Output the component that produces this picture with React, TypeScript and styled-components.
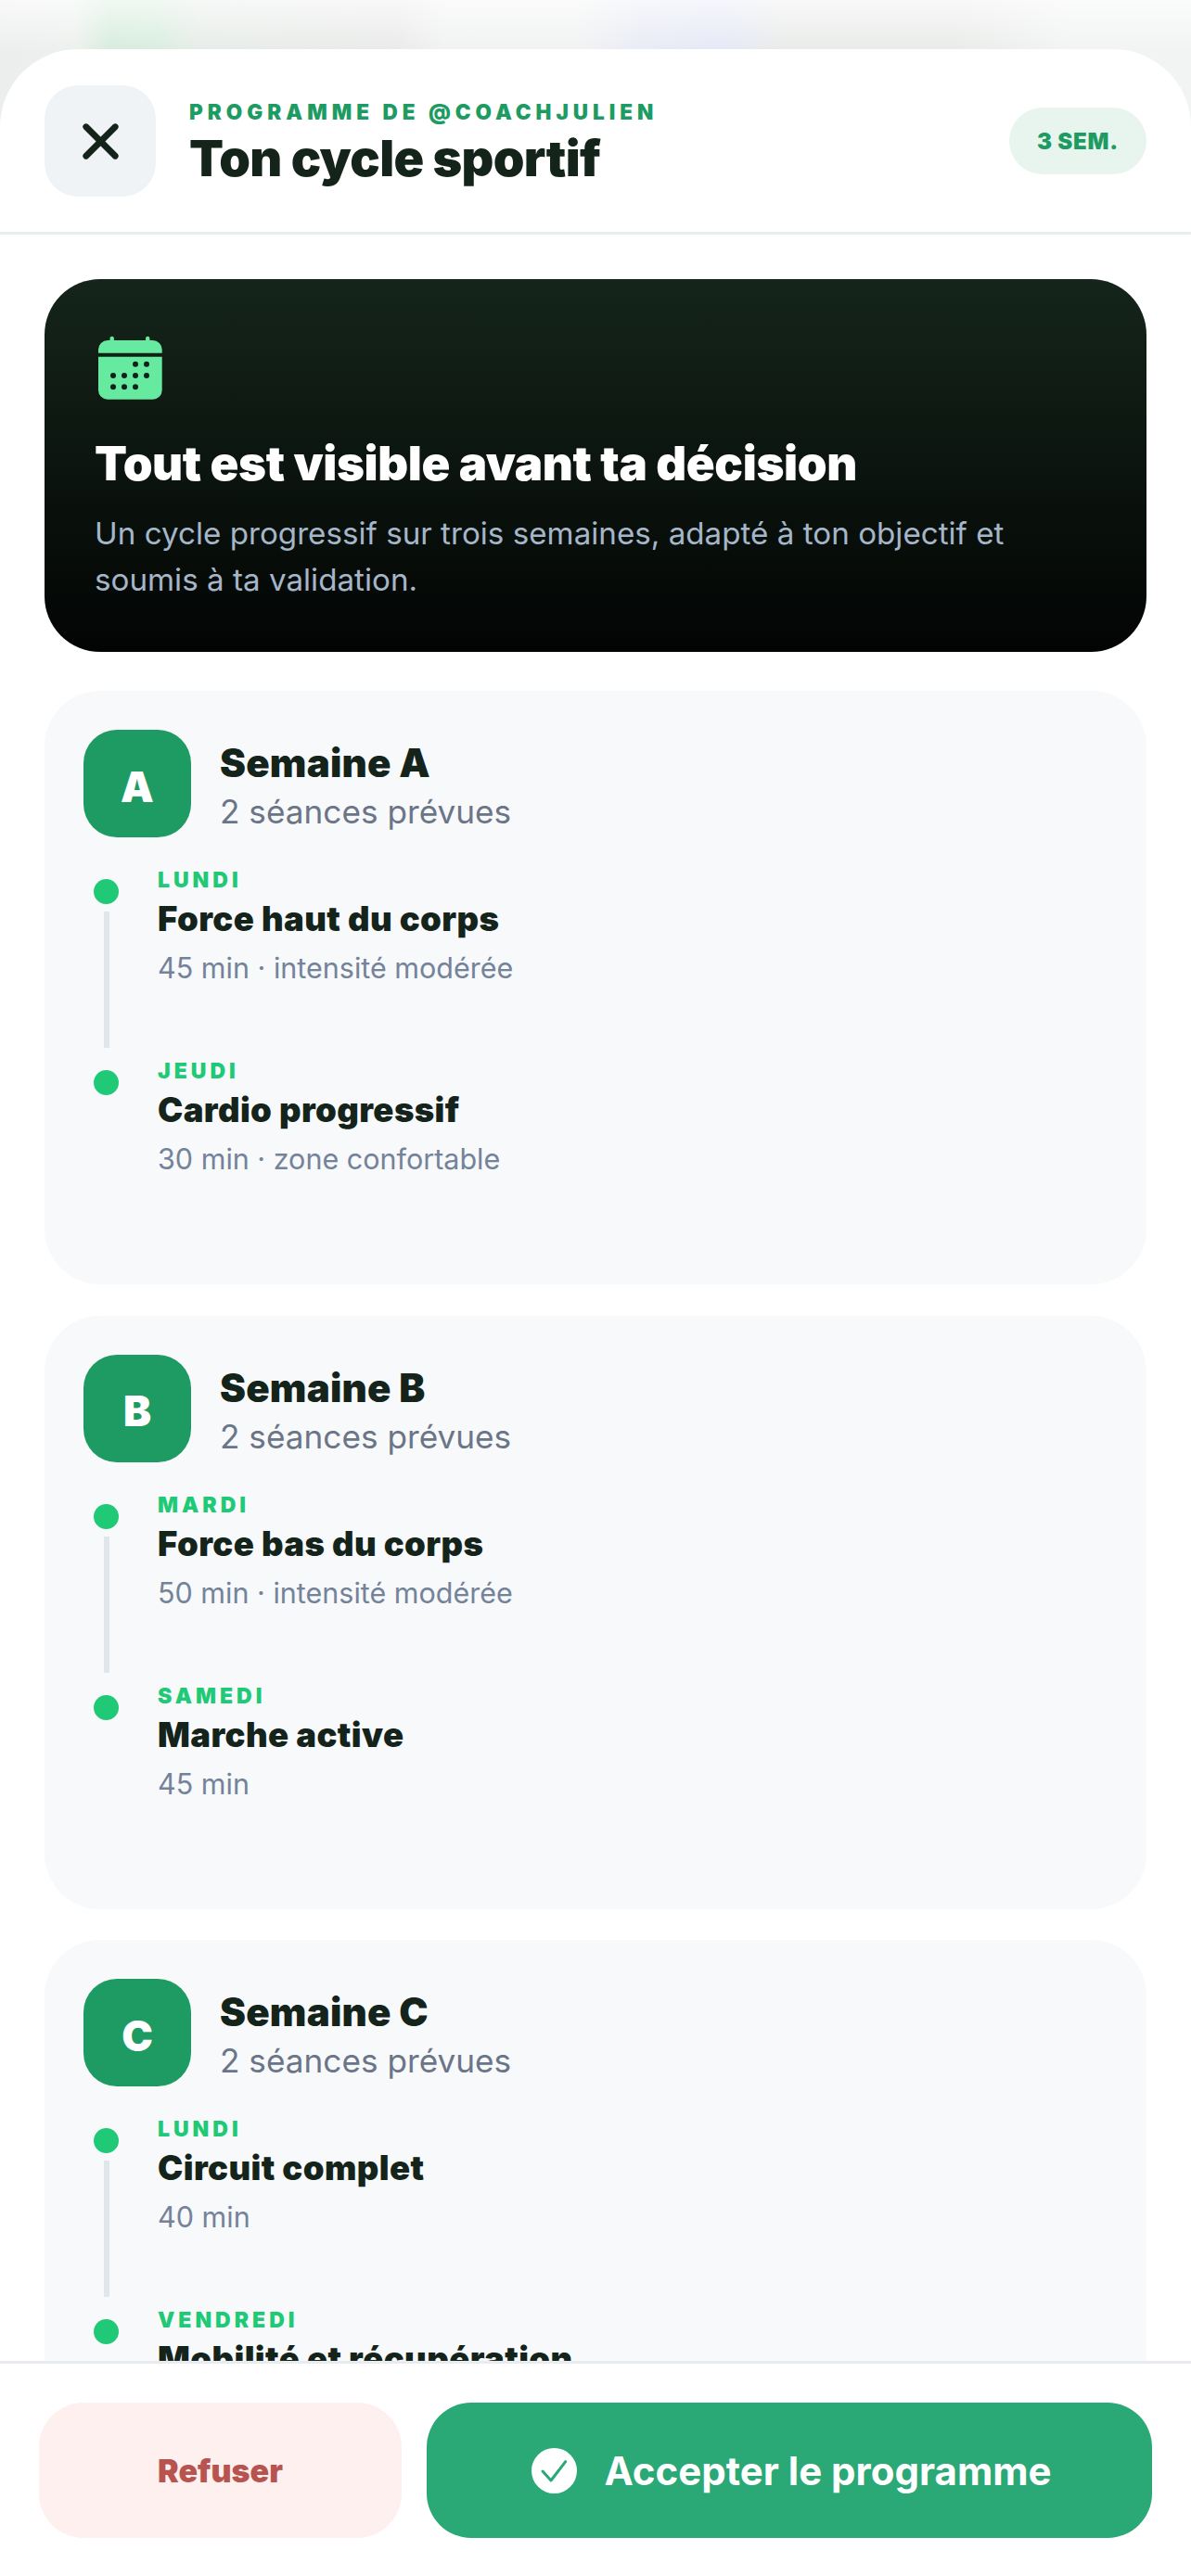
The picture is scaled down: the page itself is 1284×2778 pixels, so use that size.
import styled, { createGlobalStyle } from "styled-components";
import { X } from "lucide-react";

const GlobalStyle = createGlobalStyle`
  html, body {
    margin: 0;
    padding: 0;
    background: #fff;
  }
  * {
    box-sizing: border-box;
  }
`;

const Page = styled.div`
  width: 1284px;
  height: 2778px;
  padding-top: 53px;
  display: flex;
  flex-direction: column;
  overflow: hidden;
  font-family: Inter, "Liberation Sans", sans-serif;
  color: #14241b;
  background:
    linear-gradient(180deg, rgba(255, 255, 255, 0.65) 0, rgba(255, 255, 255, 0) 56px),
    linear-gradient(90deg, #eceeed 0, #edf1ee 80px, #d6ecdc 118px, #d8eddf 170px, #e7ece8 215px, #e9eae9 430px, #f1f3f2 480px, #f1f3f2 620px, #e8eaf5 695px, #e5e8f6 780px, #e9ebe9 840px, #e9ebe9 1030px, #f2f4f3 1150px, #f2f4f4 1284px);
`;

const Sheet = styled.div`
  flex: 1;
  min-height: 0;
  display: flex;
  flex-direction: column;
  background: #fff;
  border-radius: 84px 84px 0 0;
  overflow: hidden;
`;

const Header = styled.header`
  flex: none;
  height: 200px;
  padding: 39px 48px 0;
  display: flex;
  align-items: flex-start;
  gap: 36px;
  border-bottom: 3px solid #e8edf0;
`;

const CloseButton = styled.button`
  flex: none;
  width: 120px;
  height: 120px;
  border: none;
  border-radius: 36px;
  background: #f0f3f6;
  color: #14241b;
  display: flex;
  align-items: center;
  justify-content: center;
  padding: 0;
`;

const HeaderText = styled.div`
  flex: 1;
  min-width: 0;
`;

const Eyebrow = styled.div`
  margin-top: 14px;
  font-size: 22.5px;
  line-height: 30px;
  font-weight: 900;
  letter-spacing: 5px;
  color: #1e9b62;
  text-transform: uppercase;
`;

const Title = styled.h1`
  margin: 3px 0 0;
  font-size: 54px;
  line-height: 64px;
  font-weight: 900;
  letter-spacing: -0.7px;
  color: #14241b;
`;

const WeeksBadge = styled.div`
  flex: none;
  width: 148px;
  height: 72px;
  margin-top: 24px;
  border-radius: 36px;
  background: #e8f5ee;
  color: #1e9b62;
  display: flex;
  align-items: center;
  justify-content: center;
  font-size: 24px;
  font-weight: 900;
  letter-spacing: 0.8px;
`;

const Scroll = styled.main`
  flex: 1;
  min-height: 0;
  overflow: hidden;
  padding: 48px 48px 0;
  display: flex;
  flex-direction: column;
  gap: 33.5px;
`;

const Hero = styled.section`
  flex: none;
  height: 402px;
  margin-bottom: 8.5px;
  padding: 54px;
  border-radius: 60px;
  background: linear-gradient(180deg, #15251b 0%, #020403 100%);
`;

const HeroIcon = styled.svg`
  display: block;
  width: 84px;
  height: 84px;
`;

const HeroTitle = styled.h2`
  margin: 31px 0 0;
  font-size: 51px;
  line-height: 60px;
  font-weight: 900;
  letter-spacing: -0.4px;
  color: #fff;
  white-space: nowrap;
`;

const HeroText = styled.p`
  margin: 20px 0 0;
  font-size: 33.2px;
  line-height: 50px;
  color: #a5b6c8;
`;

const WeekCard = styled.section`
  flex: none;
  height: 640px;
  padding: 42px;
  border-radius: 60px;
  background: #f7f9fb;
`;

const WeekHead = styled.div`
  display: flex;
  align-items: center;
  gap: 31px;
`;

const WeekLetter = styled.div`
  flex: none;
  width: 116px;
  height: 116px;
  padding-top: 6px;
  border-radius: 36px;
  background: #1e9b62;
  color: #fff;
  display: flex;
  align-items: center;
  justify-content: center;
  font-size: 45px;
  font-weight: 900;
`;

const WeekInfo = styled.div`
  padding-top: 6px;
`;

const WeekName = styled.div`
  font-size: 42px;
  line-height: 54px;
  font-weight: 900;
  letter-spacing: 0.2px;
  color: #14241b;
`;

const WeekSub = styled.div`
  font-size: 35.2px;
  line-height: 50px;
  color: #6b7588;
`;

const Timeline = styled.div`
  margin-top: 31px;
  display: flex;
  flex-direction: column;
`;

const Session = styled.div`
  height: 206px;
  display: flex;
  gap: 42px;
`;

const Rail = styled.div`
  flex: none;
  width: 27px;
  margin-left: 11px;
  padding-top: 14px;
  display: flex;
  flex-direction: column;
  align-items: center;
`;

const Dot = styled.div`
  flex: none;
  width: 27px;
  height: 27px;
  border-radius: 50%;
  background: #20c975;
`;

const RailLine = styled.div`
  width: 6px;
  height: 147px;
  margin-top: 8px;
  background: #dfe7eb;
`;

const Day = styled.div`
  font-size: 23px;
  line-height: 30px;
  font-weight: 900;
  letter-spacing: 4px;
  color: #20c975;
  text-transform: uppercase;
`;

const SessionTitle = styled.div`
  margin-top: 4px;
  font-size: 36.5px;
  line-height: 46px;
  font-weight: 900;
  letter-spacing: 0.4px;
  color: #14241b;
`;

const SessionMeta = styled.div`
  margin-top: 8px;
  font-size: 30.5px;
  line-height: 44px;
  color: #74839a;
`;

const Footer = styled.footer`
  flex: none;
  height: 232px;
  padding: 42px;
  display: grid;
  grid-template-columns: 391fr 782fr;
  gap: 27px;
  background: #fff;
  border-top: 3px solid #e8ecf0;
`;

const ActionButton = styled.button<{ $primary?: boolean }>`
  height: 146px;
  border: none;
  border-radius: 48px;
  padding: ${(p) => (p.$primary ? "0 0 0 5px" : "0")};
  display: flex;
  align-items: center;
  justify-content: center;
  gap: 29px;
  font-family: inherit;
  font-size: ${(p) => (p.$primary ? "42px" : "34px")};
  font-weight: ${(p) => (p.$primary ? 700 : 900)};
  background: ${(p) => (p.$primary ? "#2aa876" : "#fef0ee")};
  color: ${(p) => (p.$primary ? "#fff" : "#b85450")};
`;

const CheckIcon = styled.svg`
  flex: none;
  width: 49px;
  height: 49px;
`;

const weeks = [
  {
    letter: "A",
    sessions: [
      { day: "Lundi", title: "Force haut du corps", meta: "45 min · intensité modérée" },
      { day: "Jeudi", title: "Cardio progressif", meta: "30 min · zone confortable" },
    ],
  },
  {
    letter: "B",
    sessions: [
      { day: "Mardi", title: "Force bas du corps", meta: "50 min · intensité modérée" },
      { day: "Samedi", title: "Marche active", meta: "45 min" },
    ],
  },
  {
    letter: "C",
    sessions: [
      { day: "Lundi", title: "Circuit complet", meta: "40 min" },
      { day: "Vendredi", title: "Mobilité et récupération" },
    ],
  },
];

const calendarDots = [
  [44, 37.7], [56, 37.7],
  [20, 50], [32, 50], [44, 50], [56, 50],
  [20, 62.300], [32, 62.300], [44, 62.300],
];

export default function App() {
  return (
    <Page>
      <GlobalStyle />
      <Sheet>
        <Header>
          <CloseButton aria-label="Fermer">
            <X size={63} strokeWidth={2.6} />
          </CloseButton>
          <HeaderText>
            <Eyebrow>Programme de @coachjulien</Eyebrow>
            <Title>Ton cycle sportif</Title>
          </HeaderText>
          <WeeksBadge>3 SEM.</WeeksBadge>
        </Header>

        <Scroll>
          <Hero>
            <HeroIcon viewBox="0 0 84 84">
              <path
                fill="#66eaa0"
                d="M4 25.700V22a10 10 0 0 1 10-10h2.500v-2a2.200 2.200 0 0 1 4.400 0v2H55v-2a2.200 2.200 0 0 1 4.400 0v2h3.300a10 10 0 0 1 10 10v3.700Z"
              />
              <path fill="#66eaa0" d="M4 29.700h68.700v36a10 10 0 0 1-10 10H14a10 10 0 0 1-10-10Z" />
              {calendarDots.map(([cx, cy]) => (
                <circle key={`${cx}-${cy}`} cx={cx} cy={cy} r={3} fill="#10201a" />
              ))}
            </HeroIcon>
            <HeroTitle>Tout est visible avant ta décision</HeroTitle>
            <HeroText>
              Un cycle progressif sur trois semaines, adapté à ton objectif et soumis à ta validation.
            </HeroText>
          </Hero>

          {weeks.map((week) => (
            <WeekCard key={week.letter}>
              <WeekHead>
                <WeekLetter>{week.letter}</WeekLetter>
                <WeekInfo>
                  <WeekName>Semaine {week.letter}</WeekName>
                  <WeekSub>2 séances prévues</WeekSub>
                </WeekInfo>
              </WeekHead>
              <Timeline>
                {week.sessions.map((session, index) => (
                  <Session key={session.day}>
                    <Rail>
                      <Dot />
                      {index < week.sessions.length - 1 && <RailLine />}
                    </Rail>
                    <div>
                      <Day>{session.day}</Day>
                      <SessionTitle>{session.title}</SessionTitle>
                      {session.meta && <SessionMeta>{session.meta}</SessionMeta>}
                    </div>
                  </Session>
                ))}
              </Timeline>
            </WeekCard>
          ))}
        </Scroll>

        <Footer>
          <ActionButton>Refuser</ActionButton>
          <ActionButton $primary>
            <CheckIcon viewBox="0 0 49 49">
              <circle cx="24.500" cy="24.500" r="24.500" fill="#fff" />
              <path d="M12 25l9 10 15.700-20.300" fill="none" stroke="#2aa876" strokeWidth="3" strokeLinecap="round" strokeLinejoin="round" />
            </CheckIcon>
            Accepter le programme
          </ActionButton>
        </Footer>
      </Sheet>
    </Page>
  );
}
